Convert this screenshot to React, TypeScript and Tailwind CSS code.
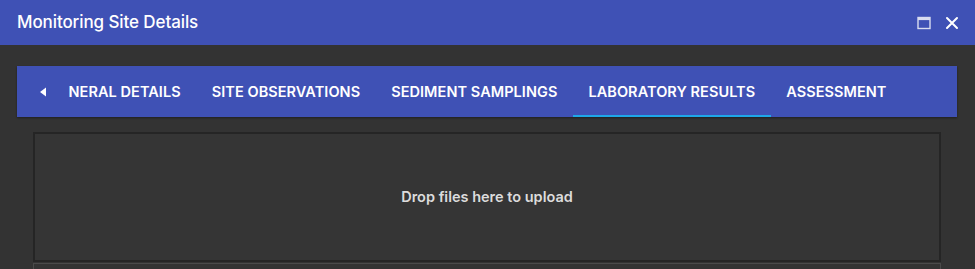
import React from 'react'

const tabs = ['NERAL DETAILS', 'SITE OBSERVATIONS', 'SEDIMENT SAMPLINGS', 'LABORATORY RESULTS', 'ASSESSMENT']

export default function App() {
  const active = 3

  return (
    <div className="w-[975px] h-[269px] overflow-hidden bg-[#333333] font-['Inter','Liberation_Sans',sans-serif]">
      {/* Title bar */}
      <div className="h-[45px] bg-[#3f51b5] flex items-center justify-between pl-[17px] pr-[16px]">
        <h1 className="text-white text-[17px] font-medium tracking-[-0.1px]">Monitoring Site Details</h1>
        <div className="flex items-center gap-[14px] text-white">
          <svg width="14" height="14" viewBox="0 0 14 14" className="opacity-80">
            <rect x="1" y="1.5" width="12" height="11" fill="none" stroke="currentColor" strokeWidth="1.4" />
            <rect x="1" y="1.5" width="12" height="2.6" fill="currentColor" />
          </svg>
          <svg width="14" height="14" viewBox="0 0 14 14">
            <path d="M2 2 L12 12 M12 2 L2 12" stroke="currentColor" strokeWidth="2" strokeLinecap="round" />
          </svg>
        </div>
      </div>

      {/* Tabs */}
      <div className="pt-[21px] pl-[17px] pr-[18px]">
        <div className="h-[51px] bg-[#3f51b5] flex items-stretch shadow-[0_1px_2px_rgba(0,0,0,0.4)]">
          <div className="w-[36px] flex items-center pl-[22px]">
            <svg width="8" height="10" viewBox="0 0 8 10">
              <path d="M7 0.5 L1 5 L7 9.5 Z" fill="white" />
            </svg>
          </div>
          {tabs.map((t, i) => (
            <div
              key={t}
              className="relative flex items-center px-[15.5px] text-[14.5px] font-semibold text-white tracking-[0.06px]"
            >
              {t}
              {i === active && <div className="absolute left-0 right-0 bottom-0 h-[2px] bg-[#1ea7e8]" />}
            </div>
          ))}
        </div>
      </div>

      {/* Drop zone */}
      <div className="pt-[15px] pl-[33px] pr-[34px]">
        <div className="h-[130px] border-2 border-[#252525] bg-[#353535] flex items-center justify-center">
          <span className="text-[#dcdcdc] text-[14.5px] font-semibold">Drop files here to upload</span>
        </div>
        <div className="h-[8px] border-t border-x border-[#4a4a4a] mt-[1px]" />
      </div>
    </div>
  )
}
